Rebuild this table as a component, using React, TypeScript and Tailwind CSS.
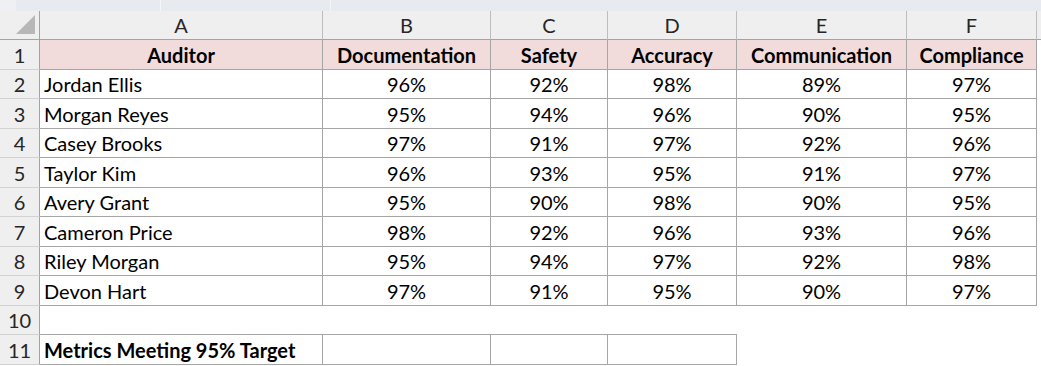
import React from "react";

const cols = ["A", "B", "C", "D", "E", "F"];
const headers = ["Auditor", "Documentation", "Safety", "Accuracy", "Communication", "Compliance"];
const data: [string, number[]][] = [
  ["Jordan Ellis", [96, 92, 98, 89, 97]],
  ["Morgan Reyes", [95, 94, 96, 90, 95]],
  ["Casey Brooks", [97, 91, 97, 92, 96]],
  ["Taylor Kim", [96, 93, 95, 91, 97]],
  ["Avery Grant", [95, 90, 98, 90, 95]],
  ["Cameron Price", [98, 92, 96, 93, 96]],
  ["Riley Morgan", [95, 94, 97, 92, 98]],
  ["Devon Hart", [97, 91, 95, 90, 97]],
];

const rowH = ["h-[30px]", "h-[29px]"];

function RowHead({ n, h }: { n: number; h: string }) {
  return (
    <div className={`${h} flex items-center justify-center bg-[#efefef] border-r border-r-[#a3a3a3] border-b border-b-[#d2d2d2] text-[#262626]`}>
      {n}
    </div>
  );
}

export default function App() {
  return (
    <div
      className="w-[1041px] h-[366px] overflow-hidden bg-white text-[20px] text-black"
      style={{ fontFamily: "Lato, 'Open Sans', sans-serif" }}
    >
      {/* top band */}
      <div className="h-[11px] bg-[#e7eaee] flex">
        <div className="w-[16px] bg-[#eef0f3]" />
        <div className="w-[144px]" />
        <div className="w-px bg-[#f4f5f7]" />
        <div className="w-[169px]" />
        <div className="w-px bg-[#f4f5f7]" />
      </div>
      <div className="grid grid-cols-[40px_283px_168px_117px_129px_170px_130px_4px]">
        {/* column header row */}
        <div className="h-[29px] bg-[#efefef] border-r border-r-[#a3a3a3] border-b border-b-[#a3a3a3] relative">
          <div
            className="absolute left-[16px] top-[4px] w-[19px] h-[19px] bg-[#b7b7b7]"
            style={{ clipPath: "polygon(100% 0, 100% 100%, 0 100%)" }}
          />
        </div>
        {cols.map((c) => (
          <div
            key={c}
            className="h-[29px] bg-[#efefef] border-r border-r-[#bdbdbd] border-b border-b-[#a3a3a3] flex items-center justify-center text-[#262626]"
          >
            {c}
          </div>
        ))}
        <div className="h-[29px] bg-[#efefef] border-b border-b-[#a3a3a3]" />

        {/* row 1 */}
        <RowHead n={1} h={rowH[0]} />
        {headers.map((h) => (
          <div
            key={h}
            className={`${rowH[0]} bg-[#f2dcdb] border-r border-b border-[#a6a6a6] flex items-center justify-center font-bold`}
          >
            {h}
          </div>
        ))}
        <div />

        {data.map(([name, vals], i) => {
          const h = rowH[(i + 1) % 2];
          return (
            <React.Fragment key={name}>
              <RowHead n={i + 2} h={h} />
              <div className={`${h} border-r border-b border-[#a6a6a6] flex items-center pl-[4px]`}>{name}</div>
              {vals.map((v, j) => (
                <div key={j} className={`${h} border-r border-b border-[#a6a6a6] flex items-center justify-center`}>
                  {v}%
                </div>
              ))}
              <div />
            </React.Fragment>
          );
        })}

        {/* row 10 */}
        <RowHead n={10} h={rowH[1]} />
        <div className="h-[29px] border-b border-[#a6a6a6]" />
        <div className="h-[29px] border-b border-[#a6a6a6]" />
        <div className="h-[29px] border-b border-[#a6a6a6]" />
        <div className="h-[29px] border-b border-[#a6a6a6]" />
        <div />
        <div />
        <div />

        {/* row 11 */}
        <RowHead n={11} h={rowH[0]} />
        <div className="h-[30px] border-r border-b border-[#a6a6a6] flex items-center pl-[4px] font-bold">
          Metrics Meeting 95% Target
        </div>
        <div className="h-[30px] border-r border-b border-[#a6a6a6]" />
        <div className="h-[30px] border-r border-b border-[#a6a6a6]" />
        <div className="h-[30px] border-r border-b border-[#a6a6a6]" />
        <div />
        <div />
        <div />
      </div>
    </div>
  );
}
